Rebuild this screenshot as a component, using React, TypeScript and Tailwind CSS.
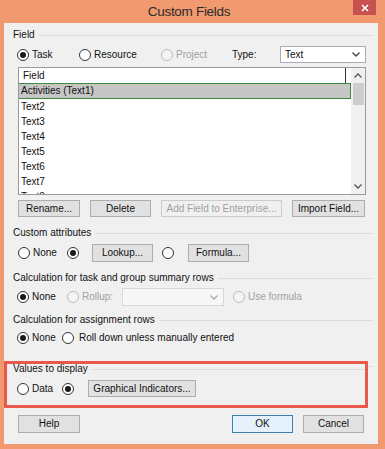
import React from "react";

function Radio({ checked = false, disabled = false }: { checked?: boolean; disabled?: boolean }) {
  return (
    <span
      className={
        disabled
          ? "w-[12px] h-[12px] shrink-0 rounded-full border border-[#bcbcbc] bg-[#f4f4f4] flex items-center justify-center"
          : "w-[12px] h-[12px] shrink-0 rounded-full border border-[#333333] bg-white flex items-center justify-center"
      }
    >
      {checked && <span className="w-[6px] h-[6px] rounded-full bg-[#1a1a1a]" />}
    </span>
  );
}

function Opt({ label, checked = false, disabled = false, w, gap = "gap-[3px]" }: { label?: string; checked?: boolean; disabled?: boolean; w: string; gap?: string }) {
  return (
    <div className={`${w} ${gap} shrink-0 flex items-center`}>
      <Radio checked={checked} disabled={disabled} />
      {label && <span className={disabled ? "text-[#a0a0a0] whitespace-nowrap" : "text-[#111111] whitespace-nowrap"}>{label}</span>}
    </div>
  );
}

function Btn({ children, w, disabled = false, primary = false, h = "h-[18px]" }: { children: React.ReactNode; w: string; disabled?: boolean; primary?: boolean; h?: string }) {
  const cls = disabled
    ? "border-[#cccccc] bg-[#f0f0f0] text-[#a0a0a0]"
    : primary
    ? "border-[#3c7fb1] bg-[#e5f1fb] text-[#111111]"
    : "border-[#adadad] bg-[#e1e1e1] text-[#111111]";
  return <div className={`${w} ${h} ${cls} shrink-0 border flex items-center justify-center whitespace-nowrap`}>{children}</div>;
}

function Chevron({ color = "#444" }: { color?: string }) {
  return (
    <svg width="8" height="5" viewBox="0 0 8 5">
      <path d="M0.5 0.5 L4 4 L7.5 0.5" fill="none" stroke={color} strokeWidth="1.3" />
    </svg>
  );
}

function GroupLabel({ text, mt }: { text: string; mt: string }) {
  return (
    <div className={`${mt} ml-[9px] mr-[5px] h-[14px] flex items-center gap-[4px]`}>
      <span className="text-[#111111] whitespace-nowrap">{text}</span>
      <div className="flex-1 h-[1px] bg-[#dcdcdc]" />
    </div>
  );
}

export default function App() {
  const rows = ["Text2", "Text3", "Text4", "Text5", "Text6", "Text7", "Text8"];
  return (
    <div className="w-[385px] h-[449px] bg-[#f1996f] flex flex-col pl-[4px] pr-[7px] pb-[5px] font-['Liberation_Sans',Arial,sans-serif] text-[10px] leading-none overflow-hidden">
      <div className="h-[23px] relative flex items-center justify-center shrink-0">
        <span className="text-[13.5px] tracking-[-0.3px] text-[#2b2b2b] -ml-[4px]">Custom Fields</span>
        <div className="absolute top-0 right-[2px] w-[23px] h-[15px] bg-[#c75050] flex items-center justify-center">
          <svg width="8" height="8" viewBox="0 0 8 8">
            <path d="M1 1 L7 7 M7 1 L1 7" stroke="white" strokeWidth="1.6" />
          </svg>
        </div>
      </div>
      <div className="flex-1 bg-[#f0f0f0] flex flex-col">
        <GroupLabel text="Field" mt="mt-[5px]" />
        <div className="mt-[4px] ml-[13px] h-[17px] flex items-center">
          <Opt label="Task" checked w="w-[62px]" />
          <Opt label="Resource" w="w-[82px]" />
          <Opt label="Project" disabled w="w-[71px]" />
          <span className="w-[48px] shrink-0 text-[#111111]">Type:</span>
          <div className="w-[86px] h-[17px] border border-[#abadb3] bg-white flex items-center justify-between pl-[4px] pr-[5px]">
            <span className="text-[#111111]">Text</span>
            <Chevron />
          </div>
        </div>
        <div className="mt-[4px] ml-[14px] mr-[12px] h-[128px] border border-[#9a9a9a] bg-white flex overflow-hidden">
          <div className="flex-1 flex flex-col overflow-hidden">
            <div className="h-[15px] shrink-0 flex items-center">
              <div className="w-[327px] h-[15px] border-r border-[#333] flex items-center pl-[4px] text-[#111111]">Field</div>
            </div>
            <div className="h-[16px] shrink-0 border border-[#3c8a3c] bg-[#c6c6c6] flex items-center pl-[2px] text-[#111111] -ml-[1px]">Activities (Text1)</div>
            {rows.map((r) => (
              <div key={r} className="h-[15px] shrink-0 flex items-center pl-[2px] text-[#111111]">{r}</div>
            ))}
          </div>
          <div className="w-[14px] shrink-0 bg-[#f0f0f0] flex flex-col items-center">
            <div className="h-[15px] flex items-center justify-center rotate-180">
              <Chevron color="#555" />
            </div>
            <div className="w-[11px] h-[22px] bg-[#cdcdcd]" />
            <div className="flex-1" />
            <div className="h-[15px] flex items-center justify-center">
              <Chevron color="#555" />
            </div>
          </div>
        </div>
        <div className="mt-[5px] ml-[14px] flex items-center">
          <Btn w="w-[62px]" h="h-[17px]">Rename...</Btn>
          <div className="ml-[10px]"><Btn w="w-[61px]" h="h-[17px]">Delete</Btn></div>
          <div className="ml-[10px]"><Btn w="w-[121px]" h="h-[17px]" disabled>Add Field to Enterprise...</Btn></div>
          <div className="ml-[10px]"><Btn w="w-[73px]" h="h-[17px]">Import Field...</Btn></div>
        </div>
        <GroupLabel text="Custom attributes" mt="mt-[9px]" />
        <div className="mt-[4px] ml-[14px] h-[18px] flex items-center">
          <Opt label="None" w="w-[49px]" />
          <Opt checked w="w-[25px]" />
          <Btn w="w-[61px]">Lookup...</Btn>
          <div className="ml-[9px]"><Opt w="w-[26px]" /></div>
          <Btn w="w-[61px]">Formula...</Btn>
        </div>
        <GroupLabel text="Calculation for task and group summary rows" mt="mt-[9px]" />
        <div className="mt-[3px] ml-[13px] h-[18px] flex items-center">
          <Opt label="None" checked w="w-[50px]" />
          <Opt label="Rollup:" disabled w="w-[55px]" />
          <div className="w-[102px] h-[18px] border border-[#d9d9d9] bg-[#f7f7f7] flex items-center justify-end pr-[5px]">
            <Chevron color="#aaa" />
          </div>
          <div className="ml-[9px]"><Opt label="Use formula" disabled w="w-[90px]" /></div>
        </div>
        <GroupLabel text="Calculation for assignment rows" mt="mt-[7px]" />
        <div className="mt-[2px] ml-[13px] h-[18px] flex items-center">
          <Opt label="None" checked w="w-[45px]" />
          <Opt label="Roll down unless manually entered" w="w-[200px]" gap="gap-[5px]" />
        </div>
        <div className="mt-[14px] flex items-start">
          <div className="w-[364px] h-[47px] border-[3px] border-[#e8584b] flex flex-col">
            <div className="-mt-[1px] ml-[6px] h-[12px] flex items-center gap-[4px]">
              <span className="text-[#111111] whitespace-nowrap">Values to display</span>
              <div className="flex-1 h-[1px] bg-[#dcdcdc]" />
            </div>
            <div className="mt-[5px] ml-[10px] h-[17px] flex items-center">
              <Opt label="Data" w="w-[45px]" />
              <Opt checked w="w-[26px]" />
              <Btn w="w-[108px]" h="h-[17px]">Graphical Indicators...</Btn>
            </div>
          </div>
          <div className="mt-[5px] w-[5px] h-[1px] bg-[#dcdcdc]" />
        </div>
        <div className="mt-[7px] ml-[14px] flex items-center">
          <Btn w="w-[62px]">Help</Btn>
          <div className="ml-[152px]"><Btn w="w-[61px]" primary>OK</Btn></div>
          <div className="ml-[10px]"><Btn w="w-[61px]">Cancel</Btn></div>
        </div>
      </div>
    </div>
  );
}
